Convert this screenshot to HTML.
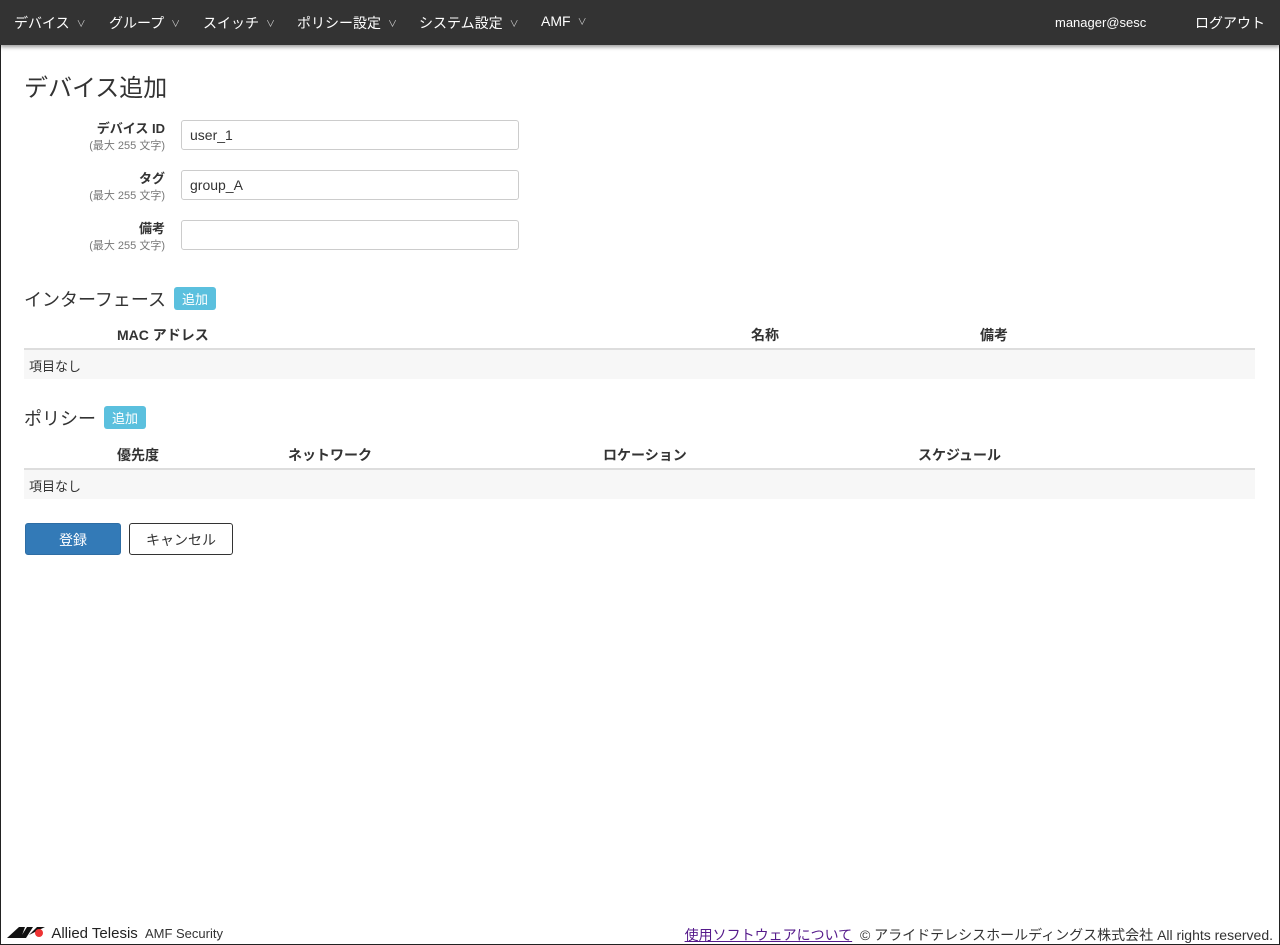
<!DOCTYPE html>
<html><head><meta charset="utf-8"><style>
*{box-sizing:border-box}
body{margin:0;width:1280px;height:945px;font-family:"Liberation Sans","Noto Sans CJK JP",sans-serif;font-size:14px;color:#333;position:relative;overflow:hidden;border:1px solid #222;background:#fff}
.nav{position:absolute;left:-1px;top:-1px;width:1280px;height:45px;background:#333;box-shadow:0 2px 4px rgba(0,0,0,.4);color:#fff;font-size:14px}
.nav span{position:absolute;top:13px}
.nav .c{font-size:9px;margin-left:7px;color:#ccc;font-style:normal;vertical-align:1px}
h1{position:absolute;left:23px;top:67px;margin:0;font-size:24px;font-weight:normal}
.lbl{position:absolute;right:1114px;text-align:right;font-weight:bold;font-size:13px}
.lbl small{display:block;font-weight:normal;font-size:11px;color:#777;margin-top:0}
.in{position:absolute;left:180px;width:338px;height:30px;border:1px solid #ccc;border-radius:3px;padding:6px 8px;font-size:14px}
h2{position:absolute;left:23px;margin:0;font-size:18px;font-weight:normal}
.badge{display:inline-block;background:#5bc0de;color:#fff;font-size:13px;padding:2px 8px;border-radius:3px;margin-left:8px;vertical-align:2px}
.th{position:absolute;font-weight:bold;font-size:14px}
.line{position:absolute;left:23px;width:1231px;height:2px;background:#ddd}
.row{position:absolute;left:23px;width:1231px;height:29px;background:#f7f7f7;padding:6px 5px;font-size:13px}
.btn{position:absolute;top:522px;height:32px;border-radius:3px;font-size:14px;text-align:center;padding-top:6px}
</style></head><body>
<div class="nav">
<span style="left:14px">デバイス<i class="c">∨</i></span>
<span style="left:109px">グループ<i class="c">∨</i></span>
<span style="left:203px">スイッチ<i class="c">∨</i></span>
<span style="left:297px">ポリシー設定<i class="c">∨</i></span>
<span style="left:419px">システム設定<i class="c">∨</i></span>
<span style="left:541px">AMF<i class="c">∨</i></span>
<span style="left:1055px;font-size:13px;top:15px">manager@sesc</span>
<span style="left:1195px">ログアウト</span>
</div>
<h1>デバイス追加</h1>
<div class="lbl" style="top:117px">デバイス ID<small>(最大 255 文字)</small></div>
<div class="in" style="top:119px">user_1</div>
<div class="lbl" style="top:167px">タグ<small>(最大 255 文字)</small></div>
<div class="in" style="top:169px">group_A</div>
<div class="lbl" style="top:217px">備考<small>(最大 255 文字)</small></div>
<div class="in" style="top:219px"></div>
<h2 style="top:285px">インターフェース<span class="badge">追加</span></h2>
<div class="th" style="left:116px;top:324px">MAC アドレス</div>
<div class="th" style="left:750px;top:324px">名称</div>
<div class="th" style="left:979px;top:324px">備考</div>
<div class="line" style="top:347px"></div>
<div class="row" style="top:349px">項目なし</div>
<h2 style="top:404px">ポリシー<span class="badge">追加</span></h2>
<div class="th" style="left:116px;top:444px">優先度</div>
<div class="th" style="left:287px;top:444px">ネットワーク</div>
<div class="th" style="left:602px;top:444px">ロケーション</div>
<div class="th" style="left:917px;top:444px">スケジュール</div>
<div class="line" style="top:467px"></div>
<div class="row" style="top:469px">項目なし</div>
<div class="btn" style="left:24px;width:96px;background:#337ab7;color:#fff;border:1px solid #2e6da4">登録</div>
<div class="btn" style="left:128px;width:104px;border:1px solid #333;color:#333">キャンセル</div>
<div style="position:absolute;left:5px;top:924px;font-size:15px;color:#222">
<svg width="42" height="14" viewBox="0 0 40 14" style="vertical-align:-1px"><path d="M0 13 L12 2 L18 2 L14 13Z" fill="#111"/><path d="M13 13 L20 2 L26 2 L19 13Z" fill="#111"/><path d="M22 10 L30 2 L38 2 Z" fill="#111"/><circle cx="32" cy="8" r="4" fill="#e33"/></svg>
Allied Telesis <span style="font-size:13px;color:#333;margin-left:3px">AMF Security</span></div>
<div style="position:absolute;right:6px;top:924px;font-size:14px;color:#333"><u style="color:#551a8b">使用ソフトウェアについて</u>&nbsp; © アライドテレシスホールディングス株式会社 All rights reserved.</div>
</body></html>
